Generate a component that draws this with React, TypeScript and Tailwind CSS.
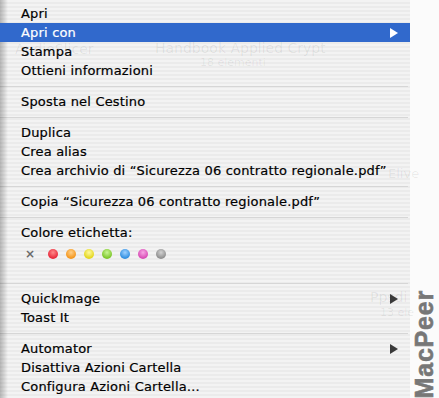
type Row =
  | { kind: 'item'; label: string; active?: boolean; submenu?: boolean }
  | { kind: 'sep' }
  | { kind: 'labels' };

const rows: Row[] = [
  { kind: 'item', label: 'Apri' },
  { kind: 'item', label: 'Apri con', active: true, submenu: true },
  { kind: 'item', label: 'Stampa' },
  { kind: 'item', label: 'Ottieni informazioni' },
  { kind: 'sep' },
  { kind: 'item', label: 'Sposta nel Cestino' },
  { kind: 'sep' },
  { kind: 'item', label: 'Duplica' },
  { kind: 'item', label: 'Crea alias' },
  { kind: 'item', label: 'Crea archivio di \u201cSicurezza 06 contratto regionale.pdf\u201d' },
  { kind: 'sep' },
  { kind: 'item', label: 'Copia \u201cSicurezza 06 contratto regionale.pdf\u201d' },
  { kind: 'sep' },
  { kind: 'item', label: 'Colore etichetta:' },
  { kind: 'labels' },
  { kind: 'sep' },
  { kind: 'item', label: 'QuickImage', submenu: true },
  { kind: 'item', label: 'Toast It' },
  { kind: 'sep' },
  { kind: 'item', label: 'Automator', submenu: true },
  { kind: 'item', label: 'Disattiva Azioni Cartella' },
  { kind: 'item', label: 'Configura Azioni Cartella\u2026' },
];

// glossy label dots, left to right
const dots = [
  'bg-[radial-gradient(circle_at_50%_35%,#ff8a8a,#e8283a_70%)]',
  'bg-[radial-gradient(circle_at_50%_35%,#ffd089,#f4961c_70%)]',
  'bg-[radial-gradient(circle_at_50%_35%,#fffaa0,#e3d61c_70%)]',
  'bg-[radial-gradient(circle_at_50%_35%,#c8f594,#7cc628_70%)]',
  'bg-[radial-gradient(circle_at_50%_35%,#9cd0ff,#2f8ee0_70%)]',
  'bg-[radial-gradient(circle_at_50%_35%,#f7a6e4,#d84bb5_70%)]',
  'bg-[radial-gradient(circle_at_50%_35%,#d2d2d2,#8f8f8f_70%)]',
];

// desktop icon captions faintly showing through the translucent menu
const ghosts = [
  { text: 'AudioSlicer', cls: 'left-[15px] top-[42px] text-[14px]' },
  { text: 'Handbook Applied Crypt', cls: 'left-[155px] top-[41px] text-[14px]' },
  { text: '18 elementi', cls: 'left-[200px] top-[57px] text-[11px]' },
  { text: 'Elive', cls: 'left-[388px] top-[167px] text-[13px]' },
  { text: 'Ppsdi', cls: 'left-[370px] top-[290px] text-[14px]' },
  { text: '13 ele', cls: 'left-[380px] top-[307px] text-[11px]' },
];

function Arrow({ white }: { white?: boolean }) {
  return (
    <svg width="8" height="10" viewBox="0 0 8 10" className="absolute right-[12px] top-[5px]">
      <path d="M0 0 L8 5 L0 10 Z" fill={white ? '#ffffff' : '#3a3a3a'} />
    </svg>
  );
}

function MenuRow({ row }: { row: Row }) {
  if (row.kind === 'sep') {
    return (
      <div className="h-[12px] flex items-center">
        <div className="h-px w-[408px] bg-[#d6d6d6]" />
      </div>
    );
  }
  if (row.kind === 'labels') {
    return (
      <div className="h-[35px] flex items-start pt-[7px] pl-[25px]">
        <span className="w-[9px] h-[10px] text-[12px] leading-[10px] font-bold text-[#6a6a6a]">×</span>
        <div className="flex gap-[8px] ml-[14px]">
          {dots.map((d, i) => (
            <span key={i} className={`block w-[10px] h-[10px] rounded-full ${d}`} />
          ))}
        </div>
      </div>
    );
  }
  return (
    <div
      className={`relative h-[19px] pl-[21px] text-[13px] leading-[19px] tracking-[0.18px] whitespace-nowrap ${
        row.active
          ? 'z-10 bg-[#3169cc] text-white [-webkit-text-stroke:0.2px_#ffffff]'
          : 'text-black [-webkit-text-stroke:0.2px_#000000]'
      }`}
    >
      {row.label}
      {row.submenu && <Arrow white={row.active} />}
    </div>
  );
}

export default function App() {
  return (
    <div className="flex w-[439px] h-[398px] overflow-hidden bg-white font-['Lucida_Grande','DejaVu_Sans',sans-serif]">
      <div className="relative w-[410px] h-full pt-[4px] bg-[repeating-linear-gradient(0deg,#f3f3f3_0px,#f3f3f3_2px,#ebebeb_2px,#ebebeb_4px)]">
        {ghosts.map((g) => (
          <span key={g.text} className={`absolute leading-none whitespace-nowrap text-black/[0.07] ${g.cls}`}>
            {g.text}
          </span>
        ))}
        <div className="absolute inset-y-0 left-0 w-[8px] bg-gradient-to-r from-black/25 to-transparent" />
        {rows.map((r, i) => (
          <MenuRow key={i} row={r} />
        ))}
      </div>
      <div className="flex-1 flex flex-col justify-end items-center pb-0 bg-[#fbfbfb]">
        <span className="[writing-mode:vertical-rl] rotate-180 font-['Liberation_Sans',Arial,sans-serif] font-black text-[25px] leading-none tracking-[0.8px] text-[#777777] [-webkit-text-stroke:0.6px_#777777]">
          MacPeer
        </span>
      </div>
    </div>
  );
}
